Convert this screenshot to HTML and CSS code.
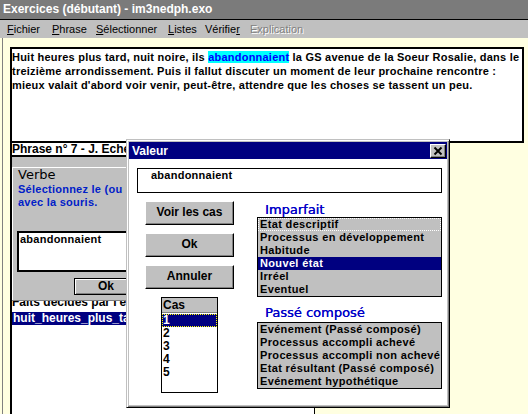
FILE: index.html
```html
<!DOCTYPE html>
<html lang="fr">
<head>
<meta charset="utf-8">
<title>Exercices (débutant) - im3nedph.exo</title>
<link rel="stylesheet" href="styles.css">
</head>
<body>
<div class="titlebar">Exercices (débutant) - im3nedph.exo</div>
<div class="menubar">
  <span class="menu"><u>F</u>ichier</span>
  <span class="menu"><u>P</u>hrase</span>
  <span class="menu"><u>S</u>électionner</span>
  <span class="menu"><u>L</u>istes</span>
  <span class="menu">Vérifie<u>r</u></span>
  <span class="menu disabled">Explication</span>
</div>
<div class="mdi">
  <div class="doc">Huit heures plus tard, nuit noire, ils <span class="hl">abandonnaient</span> la GS avenue de la Soeur Rosalie, dans le<br>treizième arrondissement. Puis il fallut discuter un moment de leur prochaine rencontre :<br>mieux valait d'abord voir venir, peut-être, attendre que les choses se tassent un peu.</div>
  <div class="pane">
    <div class="phrase-bar">Phrase n° 7 - J. Echenoz, Cherokee</div>
    <div class="verbe-panel">
      <div class="group">
        <div class="group-title">Verbe</div>
        <div class="hint">Sélectionnez le (ou les) mot(s)<br>avec la souris.</div>
        <div class="verbe-box">abandonnaient</div>
        <div class="ok-btn">Ok</div>
      </div>
    </div>
    <div class="list">
      <div class="list-label"><span>Faits décidés par l'enseignant</span></div>
      <div class="list-row">huit_heures_plus_tard_nuit_noire</div>
    </div>
  </div>
</div>

<div class="dialog">
  <div class="dlg-title">
    <span>Valeur</span>
    <span class="close-btn"><svg width="14" height="12" viewBox="0 0 14 12"><path d="M3.5 2.5 L10.5 9.5 M10.5 2.5 L3.5 9.5" stroke="#000" stroke-width="1.9" fill="none"/></svg></span>
  </div>
  <div class="dlg-body">
    <div class="dlg-input">abandonnaient</div>
    <div class="dlg-main">
      <div class="dlg-left">
        <div class="btn">Voir les cas</div>
        <div class="btn">Ok</div>
        <div class="btn">Annuler</div>
        <div class="cas">
          <div class="cas-head">Cas</div>
          <div class="cas-item sel">1</div>
          <div class="cas-item">2</div>
          <div class="cas-item">3</div>
          <div class="cas-item">4</div>
          <div class="cas-item">5</div>
        </div>
      </div>
      <div class="dlg-right">
        <div class="heading">Imparfait</div>
        <div class="box-list">
          <div class="item focus">Etat descriptif</div>
          <div class="item">Processus en développement</div>
          <div class="item">Habitude</div>
          <div class="item sel">Nouvel état</div>
          <div class="item">Irréel</div>
          <div class="item">Eventuel</div>
        </div>
        <div class="heading second">Passé composé</div>
        <div class="box-list">
          <div class="item">Evénement (Passé composé)</div>
          <div class="item">Processus accompli achevé</div>
          <div class="item">Processus accompli non achevé</div>
          <div class="item">Etat résultant (Passé composé)</div>
          <div class="item">Evénement hypothétique</div>
        </div>
      </div>
    </div>
  </div>
</div>
</body>
</html>
```

FILE: styles.css
```css
* { box-sizing: border-box; }
html, body { margin: 0; padding: 0; }
body {
  width: 528px;
  height: 414px;
  overflow: hidden;
  position: relative;
  background: #ffffe1;
  font-family: "Liberation Sans", Arial, sans-serif;
  color: #000;
}

.titlebar {
  height: 19px;
  background: #7b7b7b;
  color: #fff;
  font-weight: bold;
  font-size: 12px;
  line-height: 19px;
  padding-left: 3px;
  white-space: nowrap;
}

.menubar {
  height: 19px;
  border-top: 1px solid #000;
  background: #c0c0c0;
  display: grid;
  grid-template-columns: 45px 44px 72px 37px 45px auto;
  padding-left: 7px;
  font-size: 11px;
  line-height: 18px;
  white-space: nowrap;
}
.menu u { text-decoration: underline; }
.menu.disabled { color: #808080; text-shadow: 1px 1px 0 #fff; }

.mdi {
  margin-left: 2px;
  border-left: 1px solid #808080;
  padding-left: 7px;
  padding-top: 9px;
  height: 376px;
}

.doc {
  width: 514px;
  height: 96px;
  border: 2px solid #000;
  background: #fff;
  padding-top: 1px;
  font-weight: bold;
  font-size: 11px;
  line-height: 14px;
  letter-spacing: 0.22px;
  white-space: nowrap;
  overflow: hidden;
}
.hl { background: #00ffff; color: #0000ff; }

.pane {
  width: 305px;
  height: 271px;
  border-left: 2px solid #000;
  border-right: 1px solid #000;
  background: #fff;
  overflow: hidden;
}

.phrase-bar {
  height: 14px;
  border-bottom: 2px solid #000;
  font-weight: bold;
  font-size: 12px;
  line-height: 13px;
  white-space: nowrap;
  overflow: hidden;
}

.verbe-panel {
  height: 144px;
  background: #c0c0c0;
  border-bottom: 1px solid #808080;
  padding-top: 10px;
  overflow: hidden;
}
.group {
  border-left: 1px solid #fff;
  border-top: 1px solid #fff;
  padding-left: 4px;
  height: 140px;
}
.group-title {
  font-family: "DejaVu Sans", sans-serif;
  font-size: 13px;
  line-height: 14px;
  color: #000;
  padding-left: 1px;
}
.hint {
  margin-top: 1px;
  padding-left: 1px;
  color: #0020c8;
  font-weight: bold;
  font-size: 11px;
  line-height: 13px;
  letter-spacing: 0.25px;
  white-space: nowrap;
}
.verbe-box {
  margin-top: 22px;
  width: 220px;
  height: 41px;
  border: 2px solid #000;
  background: #fff;
  padding-left: 1px;
  font-weight: bold;
  font-size: 11px;
  line-height: 13px;
  letter-spacing: 0.25px;
}
.ok-btn {
  margin-top: 6px;
  margin-left: 57px;
  width: 64px;
  height: 17px;
  border: 1px solid #000;
  background: #c0c0c0;
  box-shadow: inset 1px 1px 0 #fff, inset -1px -1px 0 #808080;
  text-align: center;
  font-weight: bold;
  font-size: 12px;
  line-height: 15px;
}

.list-label {
  height: 10px;
  overflow: hidden;
}
.list-label span {
  display: block;
  margin-top: -6px;
  font-weight: bold;
  font-size: 12px;
  line-height: 14px;
  white-space: nowrap;
}
.list-row {
  margin-top: 1px;
  height: 13px;
  background: #000080;
  color: #fff;
  font-weight: bold;
  font-size: 12px;
  line-height: 13px;
  padding-left: 1px;
  white-space: nowrap;
}

/* Dialog window floating over the workspace */
.dialog {
  position: absolute;
  left: 126px;
  top: 139px;
  width: 324px;
  height: 269px;
  border: 1px solid;
  border-color: #c0c0c0 #000 #000 #c0c0c0;
  box-shadow: inset 1px 1px 0 #fff, inset -1px -1px 0 #808080;
  padding: 2px;
  background: #c0c0c0;
}
.dlg-title {
  height: 17px;
  background: #000080;
  color: #fff;
  font-weight: bold;
  font-size: 12px;
  display: flex;
  align-items: center;
  justify-content: space-between;
  padding: 0 1px 0 3px;
}
.close-btn {
  width: 16px;
  height: 14px;
  background: #c0c0c0;
  border: 1px solid;
  border-color: #fff #000 #000 #fff;
  box-shadow: inset -1px -1px 0 #808080;
  display: flex;
  align-items: center;
  justify-content: center;
}
.close-btn svg { display: block; }

.dlg-body {
  height: 246px;
  background: #fff;
  overflow: hidden;
}
.dlg-input {
  margin: 9px 0 0 8px;
  width: 305px;
  height: 25px;
  border: 1px solid #000;
  padding-left: 13px;
  font-weight: bold;
  font-size: 11px;
  line-height: 13px;
  letter-spacing: 0.25px;
}
.dlg-main { display: flex; }
.dlg-left {
  margin-left: 16px;
  width: 89px;
  padding-top: 8px;
  display: flex;
  flex-direction: column;
  gap: 8px;
}
.btn {
  height: 24px;
  background: #c0c0c0;
  border: 1px solid;
  border-color: #fff #000 #000 #fff;
  box-shadow: inset -1px -1px 0 #808080;
  text-align: center;
  font-weight: bold;
  font-size: 12px;
  line-height: 21px;
}
.cas {
  margin-left: 16px;
  width: 57px;
  height: 96px;
  border: 1px solid #000;
  background: #fff;
}
.cas-head {
  height: 15px;
  background: #c0c0c0;
  border-bottom: 1px solid #808080;
  margin-bottom: 1px;
  font-weight: bold;
  font-size: 12px;
  line-height: 14px;
  padding-left: 1px;
}
.cas-item {
  height: 13px;
  font-weight: bold;
  font-size: 12px;
  line-height: 13px;
  padding-left: 1px;
}
.cas-item.sel {
  background: #000080;
  color: #fff;
  outline: 1px dotted #ffff00;
  outline-offset: -1px;
}

.dlg-right {
  margin-left: 23px;
  width: 185px;
  padding-top: 9px;
}
.heading {
  font-family: "DejaVu Sans", sans-serif;
  font-size: 13px;
  line-height: 15px;
  color: #0000c8;
  padding-left: 8px;
  white-space: nowrap;
  text-shadow: 0.3px 0 0 #0000c8;
}
.heading.second { margin-top: 8px; margin-bottom: 2px; }
.box-list {
  border: 1px solid #000;
  background: #c0c0c0;
  overflow: hidden;
}
.item {
  height: 13px;
  line-height: 13px;
  padding-left: 2px;
  font-weight: bold;
  font-size: 11px;
  letter-spacing: 0.35px;
  white-space: nowrap;
}
.item.sel { background: #000080; color: #fff; }
.item.focus { outline: 1px dotted #fff; outline-offset: -1px; }
```
